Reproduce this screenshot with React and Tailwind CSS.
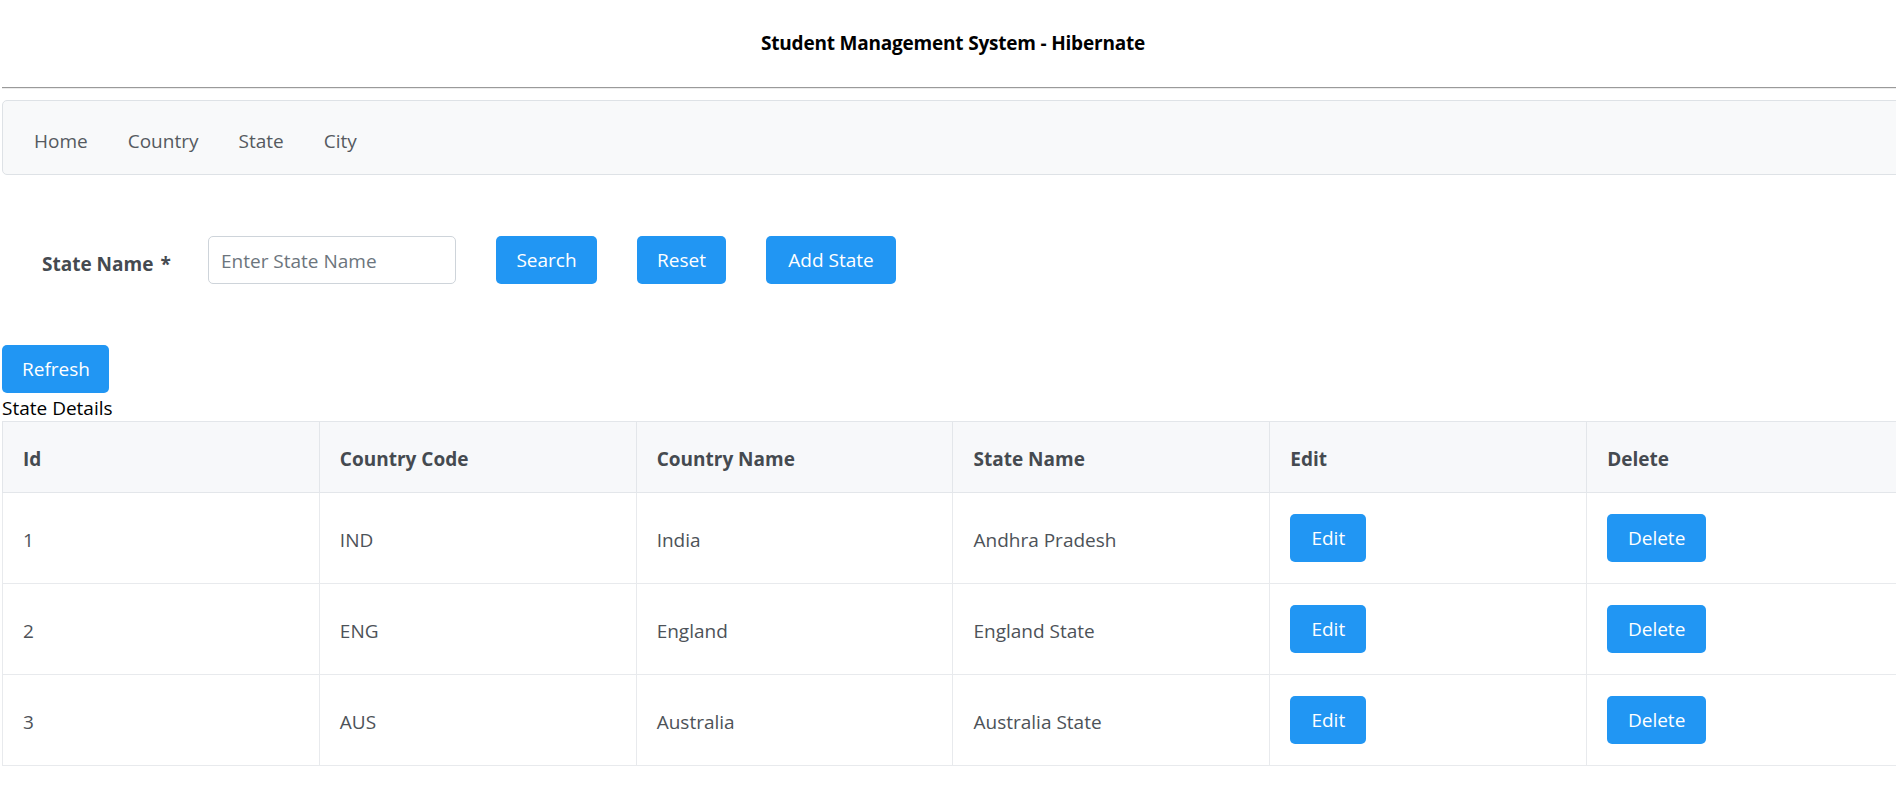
import React from "react";

const rows = [
  { id: 1, code: "IND", country: "India", state: "Andhra Pradesh" },
  { id: 2, code: "ENG", country: "England", state: "England State" },
  { id: 3, code: "AUS", country: "Australia", state: "Australia State" },
];

function Btn({ children, w = "" }) {
  return (
    <button className={`h-[48px] px-5 rounded-[5px] bg-[#2196f3] text-white text-[19px] leading-none whitespace-nowrap ${w}`}>
      {children}
    </button>
  );
}

export default function App() {
  return (
    <div className="w-full overflow-hidden bg-white" style={{ fontFamily: '"Open Sans", "Noto Sans", sans-serif' }}>
      <div className="w-[1904px] pl-[2px]">
        <div className="h-[87px] flex items-center justify-center">
          <h1 className="text-[19px] font-bold text-black tracking-[-0.2px]">Student Management System - Hibernate</h1>
        </div>
        <div className="h-[2px] border-t border-[#9a9a9a] border-b-[1px] border-b-[#ececec]" />
        <nav className="mt-[11px] h-[75px] rounded-[5px] border border-[#dee2e6] bg-[#f8f9fa] flex items-center pl-[11px] pt-[6px]">
          {["Home", "Country", "State", "City"].map((t) => (
            <a key={t} className="px-5 text-[19px] text-[#555a60] leading-[28px]">{t}</a>
          ))}
        </nav>
        <div className="mt-[61px] flex items-center gap-10 pl-[40px]">
          <label className="w-[126px] pt-[8px] text-[19px] font-bold text-[#454a50] whitespace-nowrap">
            State Name<span className="ml-[7px]">*</span>
          </label>
          <input
            placeholder="Enter State Name"
            className="w-[248px] h-[48px] px-3 pt-[2px] rounded-[5px] border border-[#ced4da] text-[19px] placeholder:text-[#6c757d] outline-none"
          />
          <Btn w="w-[101px]">Search</Btn>
          <Btn w="w-[89px]">Reset</Btn>
          <Btn w="w-[130px]">Add State</Btn>
        </div>
        <div className="mt-[61px]">
          <Btn w="w-[107px]">Refresh</Btn>
        </div>
        <div className="text-[19px] pt-[2px] leading-[26px] text-black">State Details</div>
        <table className="w-[1902px] table-fixed border-collapse text-[19px]">
          <thead>
            <tr className="bg-[#f7f8fa]">
              {["Id", "Country Code", "Country Name", "State Name", "Edit", "Delete"].map((h) => (
                <th key={h} className="border border-[#e3e6ea] px-5 pt-[23px] pb-[19px] text-left font-bold text-[#454a50] leading-[28px]">
                  {h}
                </th>
              ))}
            </tr>
          </thead>
          <tbody>
            {rows.map((r) => (
              <tr key={r.id}>
                <td className="border border-[#e8eaed] px-5 pt-[23px] pb-[19px] text-[#4d5258] leading-[28px]">{r.id}</td>
                <td className="border border-[#e8eaed] px-5 pt-[23px] pb-[19px] text-[#4d5258] leading-[28px]">{r.code}</td>
                <td className="border border-[#e8eaed] px-5 pt-[23px] pb-[19px] text-[#4d5258] leading-[28px]">{r.country}</td>
                <td className="border border-[#e8eaed] px-5 pt-[23px] pb-[19px] text-[#4d5258] leading-[28px]">{r.state}</td>
                <td className="border border-[#e8eaed] px-5 py-[21px]"><Btn w="w-[76px]">Edit</Btn></td>
                <td className="border border-[#e8eaed] px-5 py-[21px]"><Btn w="w-[99px]">Delete</Btn></td>
              </tr>
            ))}
          </tbody>
        </table>
        <div className="h-[60px]" />
      </div>
    </div>
  );
}
